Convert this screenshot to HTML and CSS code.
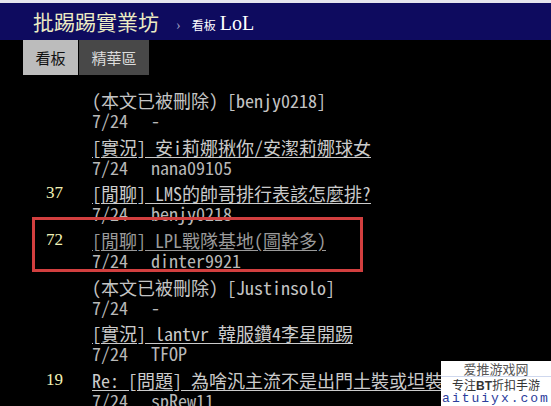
FILE: index.html
```html
<!DOCTYPE html>
<html lang="zh-Hant">
<head>
  <meta charset="UTF-8">
  <title>看板 LoL 文章列表 - 批踢踢實業坊</title>
  <link rel="stylesheet" href="styles.css">
</head>
<body>
  <div class="chrome"></div>
  <div class="topbar">
    <a class="logo" href="#">批踢踢實業坊</a><span class="sep">›</span><span class="board-label">看板</span><a class="board-name" href="#">LoL</a>
  </div>
  <div class="nav">
    <a class="tab active" href="#">看板</a>
    <a class="tab" href="#">精華區</a>
  </div>

  <div class="list">
    <div class="ent">
      <div class="nrec"></div>
      <div class="body">
        <div class="title deleted">(本文已被刪除) [benjy0218]</div>
        <div class="meta"><span class="date">7/24</span><span class="author">-</span></div>
      </div>
    </div>
    <div class="ent">
      <div class="nrec"></div>
      <div class="body">
        <div class="title"><a href="#">[實況] 安i莉娜揪你/安潔莉娜球女</a></div>
        <div class="meta"><span class="date">7/24</span><span class="author">nana09105</span></div>
      </div>
    </div>
    <div class="ent">
      <div class="nrec">37</div>
      <div class="body">
        <div class="title"><a href="#">[閒聊] LMS的帥哥排行表該怎麼排?</a></div>
        <div class="meta"><span class="date">7/24</span><span class="author">benjy0218</span></div>
      </div>
    </div>
    <div class="ent">
      <div class="nrec">72</div>
      <div class="body">
        <div class="title"><a class="visited" href="#">[閒聊] LPL戰隊基地(圖幹多)</a></div>
        <div class="meta"><span class="date">7/24</span><span class="author">dinter9921</span></div>
      </div>
    </div>
    <div class="ent">
      <div class="nrec"></div>
      <div class="body">
        <div class="title deleted">(本文已被刪除) [Justinsolo]</div>
        <div class="meta"><span class="date">7/24</span><span class="author">-</span></div>
      </div>
    </div>
    <div class="ent">
      <div class="nrec"></div>
      <div class="body">
        <div class="title"><a href="#">[實況] lantvr 韓服鑽4李星開踢</a></div>
        <div class="meta"><span class="date">7/24</span><span class="author">TFOP</span></div>
      </div>
    </div>
    <div class="ent">
      <div class="nrec">19</div>
      <div class="body">
        <div class="title"><a href="#">Re: [問題] 為啥汎主流不是出門土裝或坦裝</a></div>
        <div class="meta"><span class="date">7/24</span><span class="author">spRew11</span></div>
      </div>
    </div>
  </div>

  <div class="highlight"></div>

  <div class="watermark">
    <div class="wm-name">爱推游戏网</div>
    <div class="wm-slogan">专注<b>BT</b>折扣手游</div>
    <div class="wm-url">aituiyx.com</div>
  </div>
</body>
</html>
```

FILE: styles.css
```css
body {
  margin: 0;
  width: 551px;
  height: 406px;
  overflow: hidden;
  position: relative;
  background-color: #000;
  font-family: 'Liberation Serif', 'Noto Sans CJK TC', serif;
}

a {
  text-decoration: none;
}

.chrome {
  height: 3px;
  background-color: #e6e6ee;
}

.topbar {
  height: 37px;
  line-height: 37px;
  padding-left: 33px;
  background-color: #0e0b5f;
  white-space: nowrap;
}

.logo {
  font-family: 'Noto Sans CJK TC', sans-serif;
  font-size: 21px;
  color: #ececc4;
}

.sep {
  margin: 0 11px 0 17px;
  font-size: 14px;
  color: #9c9cc0;
}

.board-label {
  margin-right: 4px;
  font-family: 'Noto Sans CJK TC', sans-serif;
  font-size: 12px;
  color: #fff;
}

.board-name {
  font-size: 20px;
  color: #fff;
}

.nav {
  display: flex;
  height: 35px;
  padding-left: 23px;
}

.tab {
  padding: 0 12.5px;
  line-height: 35px;
  font-family: 'Noto Sans CJK TC', sans-serif;
  font-size: 15px;
  color: #dcdcdc;
  background-color: #484848;
  margin-left: 1px;
}

.tab.active {
  margin-left: 0;
  color: #111;
  background-color: #bcbcbc;
}

.list {
  padding: 15px 0 0 23px;
}

.ent {
  display: flex;
  height: 46.67px;
}

.nrec {
  flex: none;
  width: 40px;
  margin-right: 29px;
  text-align: right;
  font-size: 17px;
  line-height: 20px;
  color: #f2f2b6;
}

.body {
  min-width: 0;
}

.title,
.meta {
  font-family: 'Noto Sans Mono CJK TC', 'Liberation Mono', 'Noto Sans CJK TC', monospace;
  font-size: 18px;
  line-height: 20px;
  white-space: nowrap;
}

.title {
  color: #c4c4c4;
}

.title a {
  color: #cbcbcb;
  text-decoration: underline;
  text-underline-offset: 2px;
}

.title a.visited {
  color: #9a9a9a;
}

.meta {
  color: #b8b8b8;
}

.date {
  display: inline-block;
  width: 59px;
}

/* red annotation box drawn over the list */
.highlight {
  position: absolute;
  left: 32px;
  top: 217px;
  width: 331px;
  height: 55px;
  box-sizing: border-box;
  border: 3.5px solid #d23f3f;
}

/* site watermark pasted in the corner */
.watermark {
  position: absolute;
  right: 0;
  bottom: 0;
  width: 110px;
  height: 45px;
  background-color: #fff;
  text-align: center;
  white-space: nowrap;
  z-index: 2;
}

.wm-name {
  height: 15px;
  line-height: 15px;
  font-family: 'Noto Sans CJK SC', sans-serif;
  font-size: 13px;
  color: #555;
}

.wm-slogan {
  height: 15px;
  line-height: 15px;
  border-top: 1px solid #cfd8ee;
  font-family: 'Noto Sans CJK SC', sans-serif;
  font-size: 12px;
  color: #333;
}

.wm-slogan b {
  font-family: 'Liberation Sans', sans-serif;
  font-size: 12px;
}

.wm-url {
  height: 14px;
  line-height: 14px;
  font-family: 'Liberation Mono', monospace;
  font-size: 13px;
  letter-spacing: 2px;
  color: #2b3c9c;
}
```
